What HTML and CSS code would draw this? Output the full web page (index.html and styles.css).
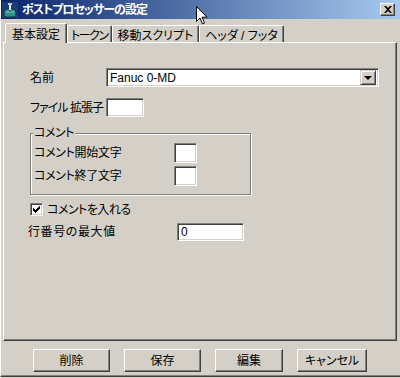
FILE: index.html
```html
<!DOCTYPE html>
<html lang="ja">
<head>
  <meta charset="UTF-8" />
  <title>ポストプロセッサーの設定</title>
  <link rel="stylesheet" href="styles.css">
</head>
<body>

  <div class="window">
    <!-- Title bar -->
    <div class="titlebar">
      <svg class="app-icon" viewBox="0 0 16 16">
        <rect x="0" y="0" width="16" height="16" fill="#1c3c7c"/>
        <path d="M2 10 Q2 7 5 7 L11 7 Q14 7 14 10 L14 13 Q14 15 12 15 L4 15 Q2 15 2 13 Z" fill="#2f8f8a" stroke="#0d2f3f" stroke-width="1"/>
        <path d="M4 10 L12 10" stroke="#7fd0c8" stroke-width="1"/>
        <rect x="6" y="1" width="4" height="2" fill="#c8c8c8"/>
        <rect x="7" y="3" width="2" height="5" fill="#e8e8e8"/>
        <rect x="7.5" y="8" width="1" height="2" fill="#404040"/>
      </svg>
      <span class="title">ポストプロセッサーの設定</span>
      <div class="close-btn">
        <svg viewBox="0 0 8 7" width="8" height="7">
          <path d="M0 0h2l2 2 2-2h2L5 3.5 8 7H6L4 5 2 7H0l3-3.5z" fill="#000"/>
        </svg>
      </div>
    </div>

    <!-- Tabs -->
    <div class="tabs">
      <div class="tab active">基本設定</div>
      <div class="tab tab-tight">トークン</div>
      <div class="tab">移動スクリプト</div>
      <div class="tab">ヘッダ / フッタ</div>
    </div>

    <!-- Tab panel -->
    <div class="panel">
      <div class="field-row">
        <label class="label-name">名前</label>
        <div class="select">
          <span class="select-value">Fanuc 0-MD</span>
          <span class="select-btn"><span class="arrow"></span></span>
        </div>
      </div>

      <div class="field-row row-ext">
        <label class="label-name label-ext">ファイル 拡張子</label>
        <div class="textbox ext-box"></div>
      </div>

      <fieldset class="group">
        <legend>コメント</legend>
        <div class="field-row group-row">
          <label class="label-comment">コメント開始文字</label>
          <div class="textbox small-box"></div>
        </div>
        <div class="field-row group-row">
          <label class="label-comment">コメント終了文字</label>
          <div class="textbox small-box"></div>
        </div>
      </fieldset>

      <div class="field-row row-check">
        <span class="checkbox">
          <svg viewBox="0 0 7 7" width="7" height="7">
            <path d="M0 2h1v1h1v1h1V3h1V2h1V1h1V0h1v3H6v1H5v1H4v1H3v1H2V6H1V5H0z" fill="#000"/>
          </svg>
        </span>
        <label>コメントを入れる</label>
      </div>

      <div class="field-row row-max">
        <label class="label-max">行番号の最大値</label>
        <div class="textbox max-box">0</div>
      </div>
    </div>

    <!-- Buttons -->
    <div class="buttons">
      <button class="win-btn wide">削除</button>
      <button class="win-btn wide">保存</button>
      <button class="win-btn">編集</button>
      <button class="win-btn cancel">キャンセル</button>
    </div>
  </div>

  <!-- mouse pointer over the title bar -->
  <svg class="cursor" viewBox="0 0 12 19" width="12" height="19">
    <path d="M0.5 0.5 L0.5 15.5 L4 12 L6.5 18 L8.5 17 L6 11.2 L11 11.2 Z" fill="#fff" stroke="#000" stroke-width="1"/>
  </svg>

</body>
</html>
```

FILE: styles.css
```css
* {
  box-sizing: border-box;
  margin: 0;
  padding: 0;
}

body {
  width: 400px;
  height: 378px;
  overflow: hidden;
  position: relative;
  background: #d4d0c8;
  color: #000;
  font-family: "Liberation Sans", "Noto Sans CJK JP", sans-serif;
  font-size: 12px;
  line-height: 14px;
  font-feature-settings: "palt";
}

.window {
  height: 377px;
  display: flex;
  flex-direction: column;
  border-left: 1px solid #fff;
  border-bottom: 1px solid #404040;
  box-shadow: inset 0 -1px 0 #808080;
}

/* title bar */
.titlebar {
  height: 19px;
  display: flex;
  align-items: center;
  padding: 0 5px 0 1px;
  background: linear-gradient(to right, #0a246a, #a6caf0);
}

.app-icon {
  width: 16px;
  height: 16px;
  margin-right: 4px;
}

.title {
  flex: 1;
  color: #fff;
  font-weight: bold;
  letter-spacing: -1px;
}

.close-btn {
  width: 15px;
  height: 13px;
  display: flex;
  align-items: center;
  justify-content: center;
  background: #d4d0c8;
  border: 1px solid;
  border-color: #fff #404040 #404040 #fff;
  box-shadow: inset -1px -1px 0 #808080;
}

/* tabs */
.tabs {
  height: 21px;
  margin-top: 2px;
  padding-left: 4px;
  display: flex;
  align-items: flex-end;
  position: relative;
  z-index: 1;
}

.tab {
  height: 17px;
  padding: 3px 5px 0;
  border: 1px solid #fff;
  border-right-color: #404040;
  border-bottom: none;
  border-radius: 2px 2px 0 0;
  box-shadow: inset -1px 0 0 #808080;
  white-space: nowrap;
}

.tab-tight {
  padding: 3px 3px 0;
  letter-spacing: -1.5px;
}

.tab.active {
  height: 20px;
  margin-bottom: -1px;
  padding: 4px 6px 0;
  background: #d4d0c8;
}

/* panel */
.panel {
  height: 299px;
  margin: 0 3px 0 2px;
  padding: 25px 0 0 26px;
  border: 1px solid;
  border-color: #fff #404040 #404040 #fff;
  box-shadow: inset -1px -1px 0 #808080;
}

.field-row {
  display: flex;
  align-items: center;
}

.label-name {
  width: 76px;
  white-space: nowrap;
}

.label-ext {
  letter-spacing: -1px;
}

.textbox {
  background: #fff;
  border: 1px solid;
  border-color: #808080 #fff #fff #808080;
  box-shadow: inset 1px 1px 0 #404040, inset -1px -1px 0 #d4d0c8;
}

.select {
  width: 273px;
  height: 19px;
  display: flex;
  align-items: center;
  padding: 2px;
  background: #fff;
  border: 1px solid;
  border-color: #808080 #fff #fff #808080;
  box-shadow: inset 1px 1px 0 #404040, inset -1px -1px 0 #d4d0c8;
}

.select-value {
  flex: 1;
  padding-left: 1px;
}

.select-btn {
  width: 16px;
  height: 15px;
  display: flex;
  align-items: center;
  justify-content: center;
  background: #d4d0c8;
  border: 1px solid;
  border-color: #d4d0c8 #404040 #404040 #d4d0c8;
  box-shadow: inset 1px 1px 0 #fff, inset -1px -1px 0 #808080;
}

.arrow {
  width: 0;
  height: 0;
  border-left: 4px solid transparent;
  border-right: 4px solid transparent;
  border-top: 4px solid #000;
  margin-top: 1px;
}

.row-ext {
  margin-top: 11px;
}

.ext-box {
  width: 38px;
  height: 19px;
}

/* comment group */
.group {
  width: 221px;
  min-width: 0;
  margin-top: 11px;
  padding: 0 0 8px 2px;
  border: 1px solid #808080;
  box-shadow: inset 1px 1px 0 #fff, 1px 1px 0 #fff;
}

.group legend {
  line-height: 10px;
  padding: 0 1px;
  background: #d4d0c8;
  letter-spacing: -0.5px;
}

.group-row {
  margin-top: 3px;
}

.group-row:first-of-type {
  margin-top: 5px;
}

.label-comment {
  width: 141px;
  padding-left: 1px;
  letter-spacing: -0.3px;
}

.small-box {
  width: 23px;
  height: 20px;
}

.row-check {
  margin-top: 8px;
  height: 13px;
}

.row-check label {
  letter-spacing: -0.5px;
}

.checkbox {
  width: 13px;
  height: 13px;
  margin-right: 4px;
  display: flex;
  align-items: center;
  justify-content: center;
  background: #fff;
  border: 1px solid;
  border-color: #808080 #fff #fff #808080;
  box-shadow: inset 1px 1px 0 #404040, inset -1px -1px 0 #d4d0c8;
}

.row-max {
  margin-top: 7px;
}

.label-max {
  width: 149px;
  margin-left: -2px;
  letter-spacing: 0.6px;
}

.max-box {
  width: 67px;
  height: 18px;
  padding: 1px 0 0 3px;
  line-height: 14px;
}

/* bottom buttons */
.buttons {
  display: flex;
  gap: 14px;
  margin-top: 8px;
  padding-left: 32px;
}

.win-btn {
  width: 68px;
  height: 23px;
  font: inherit;
  color: #000;
  background: #d4d0c8;
  border: 1px solid;
  border-color: #fff #404040 #404040 #fff;
  box-shadow: inset -1px -1px 0 #808080;
}

.win-btn.wide {
  width: 77px;
}

.win-btn.cancel {
  width: 70px;
}

.cursor {
  position: absolute;
  left: 196px;
  top: 6px;
}
```
